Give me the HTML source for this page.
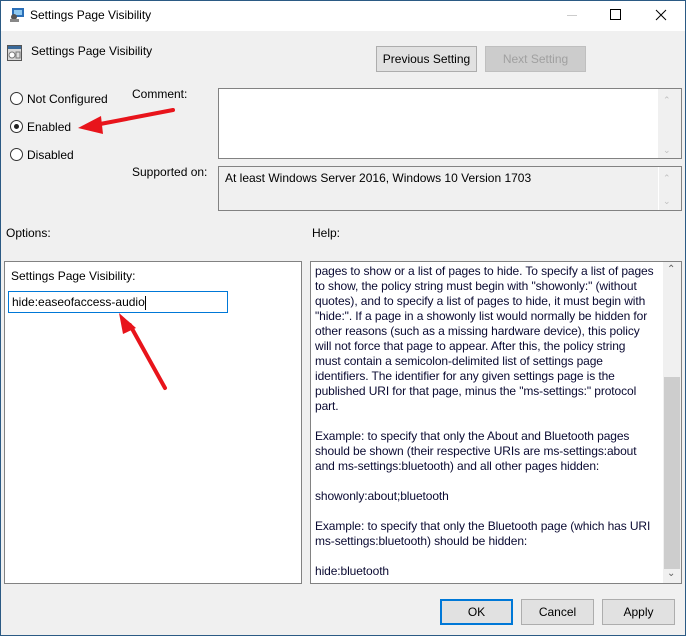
<!DOCTYPE html>
<html><head><meta charset="utf-8"><style>
*{margin:0;padding:0;box-sizing:border-box}
body{width:686px;height:636px;background:#f0f0f0;font-family:"Liberation Sans",sans-serif;font-size:12px;color:#000;position:relative;overflow:hidden}
.a{position:absolute;white-space:nowrap}
.btn{position:absolute;background:#e1e1e1;border:1px solid #adadad;text-align:center;line-height:22px;font-size:12px}
.radio{position:absolute;width:13px;height:13px;border:1px solid #333;border-radius:50%;background:#fff}
.help div{height:15px;line-height:15px}
</style></head><body>
<div class="a" style="left:0;top:0;width:686px;height:31px;background:#fff"></div>
<div class="a" style="left:0;top:0;width:1px;height:636px;background:#2b5a84"></div>
<div class="a" style="left:685px;top:0;width:1px;height:636px;background:#2b5a84"></div>
<div class="a" style="left:0;top:635px;width:686px;height:1px;background:#2b5a84"></div>
<div class="a" style="left:0;top:0;width:686px;height:1px;background:#2b5a84"></div>
<svg class="a" style="left:9px;top:7px" width="16" height="16"><rect x="3" y="1" width="12" height="9" fill="#2a6fb8"/><rect x="5" y="3" width="8" height="5" fill="#8ec8f0"/><circle cx="5" cy="10" r="3" fill="#555"/><rect x="1" y="12" width="9" height="3" fill="#888"/></svg>
<div class="a" style="left:30px;top:8px;font-size:12px">Settings Page Visibility</div>
<div class="a" style="left:567px;top:15px;width:10px;height:1px;background:#ccc"></div>
<div class="a" style="left:610px;top:9px;width:11px;height:11px;border:1px solid #000"></div>
<svg class="a" style="left:655px;top:9px" width="12" height="12"><path d="M1 1L11 11M11 1L1 11" stroke="#000" stroke-width="1"/></svg>

<svg class="a" style="left:7px;top:44px" width="16" height="18"><rect x="0.5" y="1.5" width="14" height="15" fill="#d8d8d8" stroke="#555"/><rect x="1" y="2" width="13" height="3" fill="#3a6a9a"/><circle cx="5" cy="11" r="3" fill="#fff" stroke="#777"/><rect x="9" y="8" width="4" height="6" fill="#ddd" stroke="#777"/></svg>
<div class="a" style="left:31px;top:44px">Settings Page Visibility</div>
<div class="btn" style="left:376px;top:46px;width:101px;height:26px;line-height:24px">Previous Setting</div>
<div class="btn" style="left:485px;top:46px;width:101px;height:26px;line-height:24px;background:#cccccc;border-color:#bfbfbf;color:#a0a0a0">Next Setting</div>

<div class="radio" style="left:10px;top:92px"></div><div class="a" style="left:27px;top:92px">Not Configured</div>
<div class="radio" style="left:10px;top:120px"><div style="position:absolute;left:3px;top:3px;width:5px;height:5px;border-radius:50%;background:#222"></div></div><div class="a" style="left:27px;top:120px">Enabled</div>
<div class="radio" style="left:10px;top:148px"></div><div class="a" style="left:27px;top:148px">Disabled</div>
<div class="a" style="left:132px;top:87px">Comment:</div>
<div class="a" style="left:132px;top:165px">Supported on:</div>

<div class="a" style="left:218px;top:88px;width:464px;height:71px;border:1px solid #828282;background:#fff"></div>
<div class="a" style="left:658px;top:89px;width:23px;height:69px;background:#f0f0f0"></div>
<div class="a" style="left:663px;top:95px;color:#c0c0c0;font-size:9px">&#8963;</div>
<div class="a" style="left:663px;top:145px;color:#c0c0c0;font-size:9px">&#8964;</div>
<div class="a" style="left:218px;top:166px;width:464px;height:45px;border:1px solid #828282;background:#f0f0f0"></div>
<div class="a" style="left:658px;top:167px;width:23px;height:43px;background:#f0f0f0;border-left:1px solid #fff"></div>
<div class="a" style="left:225px;top:171px">At least Windows Server 2016, Windows 10 Version 1703</div>
<div class="a" style="left:663px;top:173px;color:#c0c0c0;font-size:9px">&#8963;</div>
<div class="a" style="left:663px;top:196px;color:#c0c0c0;font-size:9px">&#8964;</div>

<div class="a" style="left:6px;top:226px">Options:</div>
<div class="a" style="left:312px;top:226px">Help:</div>

<div class="a" style="left:4px;top:261px;width:298px;height:323px;border:1px solid #828282;background:#fff"></div>
<div class="a" style="left:11px;top:269px">Settings Page Visibility:</div>
<div class="a" style="left:8px;top:291px;width:220px;height:22px;border:1px solid #0078d7;background:#fff;padding-left:3px;line-height:20px">hide:easeofaccess-audio<span style="display:inline-block;width:1px;height:14px;background:#000;vertical-align:middle"></span></div>

<div class="a" style="left:310px;top:261px;width:372px;height:323px;border:1px solid #828282;background:#fff"></div>
<div class="a" style="left:663px;top:262px;width:18px;height:321px;background:#f0f0f0"></div>
<div class="a" style="left:664px;top:377px;width:16px;height:192px;background:#cdcdcd"></div>
<div class="a" style="left:667px;top:264px;color:#606060;font-size:10px">&#8963;</div>
<div class="a" style="left:667px;top:568px;color:#606060;font-size:10px">&#8964;</div>
<div class="a help" style="left:315px;top:264px;color:#0a0a32;letter-spacing:-0.1px">
<div>pages to show or a list of pages to hide. To specify a list of pages</div>
<div>to show, the policy string must begin with "showonly:" (without</div>
<div>quotes), and to specify a list of pages to hide, it must begin with</div>
<div>"hide:". If a page in a showonly list would normally be hidden for</div>
<div>other reasons (such as a missing hardware device), this policy</div>
<div>will not force that page to appear. After this, the policy string</div>
<div>must contain a semicolon-delimited list of settings page</div>
<div>identifiers. The identifier for any given settings page is the</div>
<div>published URI for that page, minus the "ms-settings:" protocol</div>
<div>part.</div>
<div></div>
<div>Example: to specify that only the About and Bluetooth pages</div>
<div>should be shown (their respective URIs are ms-settings:about</div>
<div>and ms-settings:bluetooth) and all other pages hidden:</div>
<div></div>
<div>showonly:about;bluetooth</div>
<div></div>
<div>Example: to specify that only the Bluetooth page (which has URI</div>
<div>ms-settings:bluetooth) should be hidden:</div>
<div></div>
<div>hide:bluetooth</div>
</div>

<div class="btn" style="left:440px;top:599px;width:73px;height:26px;border:2px solid #0078d7;line-height:22px">OK</div>
<div class="btn" style="left:521px;top:599px;width:73px;height:26px;line-height:24px">Cancel</div>
<div class="btn" style="left:602px;top:599px;width:73px;height:26px;line-height:24px">Apply</div>

<svg class="a" style="left:0;top:0" width="686" height="636">
<path d="M173 110L95 125" stroke="#e8141b" stroke-width="4" stroke-linecap="round"/>
<path d="M78 128L101 116L103 134Z" fill="#e8141b"/>
<path d="M165 388L130 325" stroke="#e8141b" stroke-width="4" stroke-linecap="round"/>
<path d="M119 313L136 328L123 334Z" fill="#e8141b"/>
</svg>
</body></html>
